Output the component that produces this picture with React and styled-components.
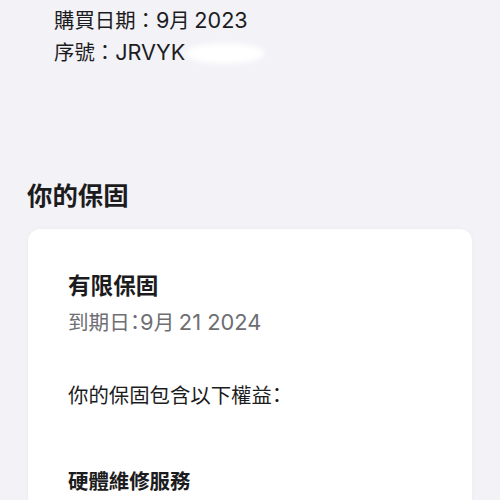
import React from "react";
import styled, { createGlobalStyle } from "styled-components";

const Global = createGlobalStyle`
  html, body { margin: 0; padding: 0; background: #f2f2f7; }
  body { font-family: "Noto Sans CJK TC", "Noto Sans", sans-serif; color: #1c1c1e; }
`;

const Page = styled.div`
  width: 500px;
  height: 500px;
  overflow: hidden;
  background: #f2f2f7;
`;

const Lat = styled.span`
  font-family: "Inter", "Liberation Sans", sans-serif;
  font-size: 1.06em;
`;

const Info = styled.div`
  padding: 4px 0 0 54px;
  display: flex;
  flex-direction: column;
`;

const InfoLine = styled.div`
  font-size: 20.4px;
  line-height: 31px;
  color: #1c1c1e;
  white-space: nowrap;
`;

const Redact = styled.span`
  position: relative;
  display: inline-block;
  width: 76px;
  height: 20px;
  vertical-align: middle;
  &::after {
    content: "";
    position: absolute;
    left: 0px;
    top: -1px;
    width: 80px;
    height: 21px;
    background: #fff;
    border-radius: 50%;
    filter: blur(3px);
  }
`;

const SectionTitle = styled.h2`
  margin: 109px 0 0 27px;
  font-size: 25.4px;
  line-height: 34px;
  font-weight: 700;
  color: #1c1c1e;
`;

const Card = styled.div`
  margin: 18px 28px 0 28px;
  background: #fff;
  border-radius: 12px;
  box-shadow: 0 0 4px rgba(0, 0, 0, 0.04);
  padding: 40px 40px 40px 40px;
  display: flex;
  flex-direction: column;
`;

const CardTitle = styled.div`
  font-size: 22.6px;
  line-height: 32px;
  font-weight: 600;
  color: #1c1c1e;
  margin-top: 0px;
`;

const Sub = styled.div`
  font-size: 20.6px;
  line-height: 32px;
  color: #6e6e73;
  margin-top: 4px;
  font-feature-settings: "halt";
`;

const Body = styled.div`
  font-size: 20.4px;
  line-height: 32px;
  color: #1c1c1e;
  margin-top: ${(p) => p.$gap || 0}px;
  font-weight: ${(p) => (p.$bold ? 700 : 400)};
  font-feature-settings: "halt";
`;

export default function App() {
  return (
    <Page>
      <Global />
      <Info>
        <InfoLine>
          購買日期：<Lat>9</Lat>月 <Lat>2023</Lat>
        </InfoLine>
        <InfoLine>
          序號：<Lat>JRVYK</Lat>
          <Redact />
        </InfoLine>
      </Info>
      <SectionTitle>你的保固</SectionTitle>
      <Card>
        <CardTitle>有限保固</CardTitle>
        <Sub>
          到期日：<Lat>9</Lat>月 <Lat>21 2024</Lat>
        </Sub>
        <Body $gap={40}>你的保固包含以下權益：</Body>
        <Body $gap={54} $bold>
          硬體維修服務
        </Body>
      </Card>
    </Page>
  );
}
